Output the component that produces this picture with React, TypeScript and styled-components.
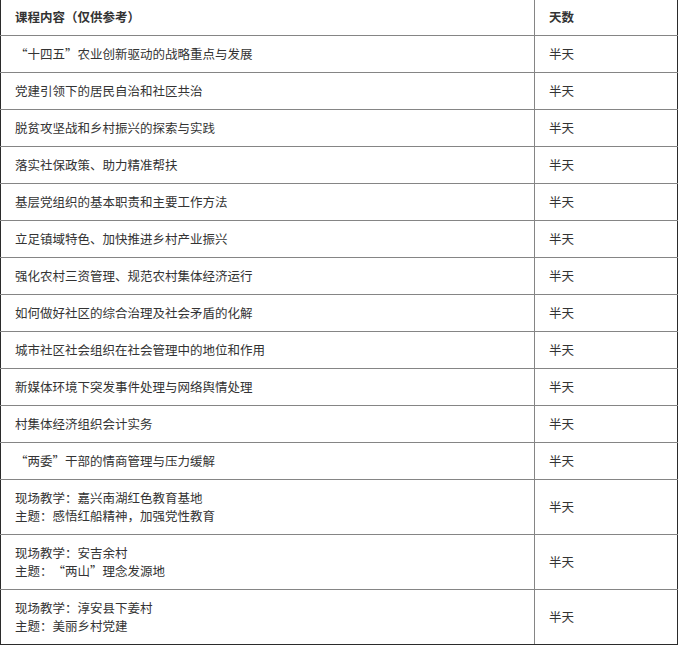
import React from "react";
import styled, { createGlobalStyle } from "styled-components";

const GlobalStyle = createGlobalStyle`
  html, body {
    margin: 0;
    padding: 0;
    background: #ffffff;
  }
  body {
    font-family: "Noto Sans CJK SC", "Microsoft YaHei", sans-serif;
    color: #333333;
    text-spacing-trim: space-all;
  }
`;

const Table = styled.table`
  width: 678px;
  margin-top: -2px;
  border-collapse: collapse;
  table-layout: fixed;
  font-size: 12.5px;
  line-height: 18px;
`;

const Cell = styled.td<{ $head?: boolean }>`
  padding: 9px 14px;
  border: 1px solid #858585;
  vertical-align: middle;
  text-align: left;
  font-weight: ${(p) => (p.$head ? 700 : 400)};
  color: #333333;

  &:first-child {
    border-left-color: #2b2b2b;
  }
  &:last-child {
    border-right-color: #2b2b2b;
  }
  tr:last-child > & {
    border-bottom-color: #2b2b2b;
  }
  tr:first-child > & {
    border-top-color: #2b2b2b;
  }
`;

const Line = styled.div`
  white-space: nowrap;
`;

type Course = { lines: string[]; days: string };

const courses: Course[] = [
  { lines: ["“十四五”农业创新驱动的战略重点与发展"], days: "半天" },
  { lines: ["党建引领下的居民自治和社区共治"], days: "半天" },
  { lines: ["脱贫攻坚战和乡村振兴的探索与实践"], days: "半天" },
  { lines: ["落实社保政策、助力精准帮扶"], days: "半天" },
  { lines: ["基层党组织的基本职责和主要工作方法"], days: "半天" },
  { lines: ["立足镇域特色、加快推进乡村产业振兴"], days: "半天" },
  { lines: ["强化农村三资管理、规范农村集体经济运行"], days: "半天" },
  { lines: ["如何做好社区的综合治理及社会矛盾的化解"], days: "半天" },
  { lines: ["城市社区社会组织在社会管理中的地位和作用"], days: "半天" },
  { lines: ["新媒体环境下突发事件处理与网络舆情处理"], days: "半天" },
  { lines: ["村集体经济组织会计实务"], days: "半天" },
  { lines: ["“两委”干部的情商管理与压力缓解"], days: "半天" },
  { lines: ["现场教学：嘉兴南湖红色教育基地", "主题：感悟红船精神，加强党性教育"], days: "半天" },
  { lines: ["现场教学：安吉余村", "主题：“两山”理念发源地"], days: "半天" },
  { lines: ["现场教学：淳安县下姜村", "主题：美丽乡村党建"], days: "半天" },
];

export default function App() {
  return (
    <>
      <GlobalStyle />
      <Table>
        <colgroup>
          <col style={{ width: 534 }} />
          <col />
        </colgroup>
        <tbody>
          <tr>
            <Cell $head>课程内容（仅供参考）</Cell>
            <Cell $head>天数</Cell>
          </tr>
          {courses.map((c, i) => (
            <tr key={i}>
              <Cell>
                {c.lines.map((l, j) => (
                  <Line key={j}>{l}</Line>
                ))}
              </Cell>
              <Cell>{c.days}</Cell>
            </tr>
          ))}
        </tbody>
      </Table>
    </>
  );
}
